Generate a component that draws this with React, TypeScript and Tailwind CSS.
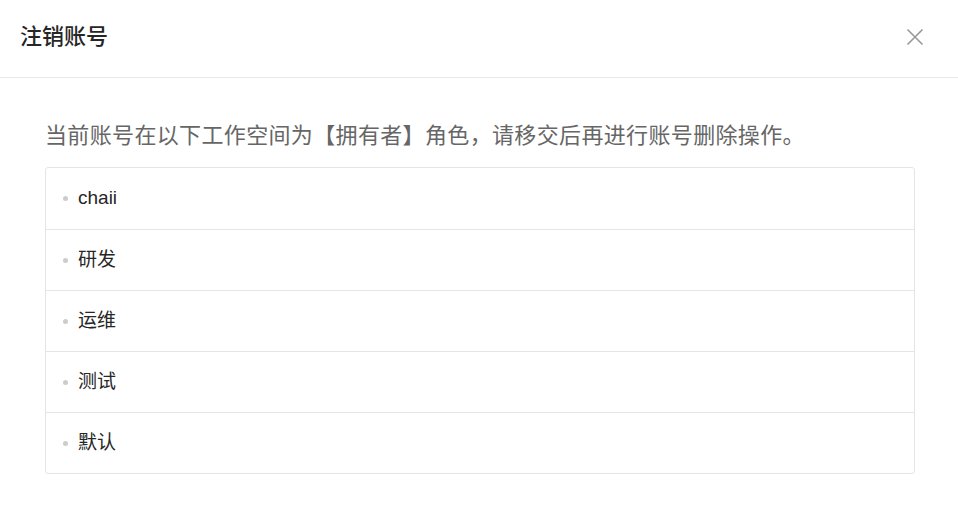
const workspaces = ["chaii", "研发", "运维", "测试", "默认"]

export default function App() {
  return (
    <div className="h-[510px] w-[958px] bg-white font-['Liberation_Sans','Noto_Sans_CJK_SC',sans-serif]">
      <div className="flex h-[78px] items-center justify-between border-b border-[#e8e8e8] pb-[3px] pl-5 pr-[31px]">
        <span className="text-[22px] font-medium leading-none text-[#262626]">注销账号</span>
        <button className="flex h-6 w-6 items-center justify-center text-[#999]">
          <svg width="18" height="18" viewBox="0 0 18 18" fill="none" stroke="currentColor" strokeWidth="1.6">
            <path d="M1.5 1.5L16.5 16.5M16.5 1.5L1.5 16.5" />
          </svg>
        </button>
      </div>

      <div className="pl-[45px] pr-[43px] pt-[44px]">
        <p className="text-[22px] leading-[28px] tracking-[0.35px] text-[#666]">
          当前账号在以下工作空间为【拥有者】角色，请移交后再进行账号删除操作。
        </p>
        <ul className="mt-[17px] rounded-[3px] border border-[#e5e5e5]">
          {workspaces.map((name, i) => (
            <li
              key={i}
              className={`flex items-center gap-[10px] pl-[17px] text-[19px] text-[#262626] ${i > 0 ? "h-[61px] border-t border-[#e5e5e5]" : "h-[61px]"}`}
            >
              <span className="h-[5px] w-[5px] rounded-full bg-[#ccc]" />
              {name}
            </li>
          ))}
        </ul>
      </div>
    </div>
  )
}
